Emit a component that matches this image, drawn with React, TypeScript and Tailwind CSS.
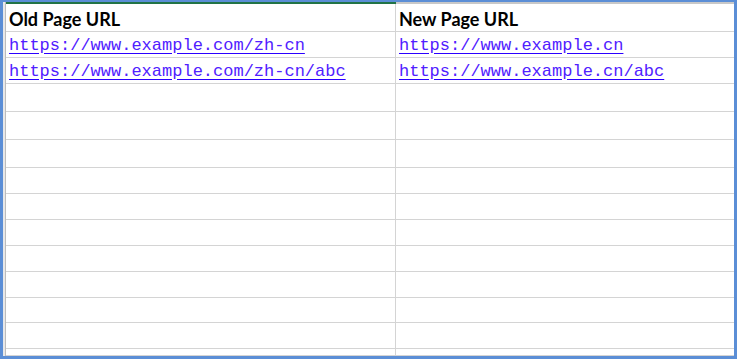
const rows: { h: number; old?: string; next?: string }[] = [
  { h: 26, old: "https://www.example.com/zh-cn", next: "https://www.example.cn" },
  { h: 26, old: "https://www.example.com/zh-cn/abc", next: "https://www.example.cn/abc" },
  { h: 28 },
  { h: 28 },
  { h: 28 },
  { h: 26 },
  { h: 26 },
  { h: 26 },
  { h: 26 },
  { h: 26 },
  { h: 25 },
  { h: 26 },
  { h: 7 },
];

function Link({ text }: { text: string }) {
  return (
    <span className="text-[#5020ff] underline decoration-[#2b00ff] underline-offset-[3px] font-['Liberation_Mono',monospace] text-[17px] leading-none whitespace-nowrap">
      {text}
    </span>
  );
}

export default function App() {
  return (
    <div className="w-[740px] h-[361px] bg-white">
      <div className="w-[737px] h-[359px] border-l-[3px] border-r-[3px] border-t-[2px] border-b-[3px] border-[#5b8ed6] flex overflow-hidden">
        {/* row header edge */}
        <div className="w-[3px] bg-[#e8e8e8] border-r border-[#bcbcbc] shrink-0" />
        <div className="flex-1 flex flex-col">
          {/* top edge: selected column A */}
          <div className="flex h-[2px] shrink-0">
            <div className="w-[390px] bg-[#217346]" />
            <div className="flex-1 bg-[#c8c8c8]" />
          </div>
          {/* header row */}
          <div className="flex h-[28px] shrink-0 border-b border-[#d4d4d4] font-['Lato',sans-serif] font-bold text-[18px] text-black">
            <div className="w-[390px] border-r border-[#d4d4d4] pl-[3px] flex items-end pb-[3px] leading-none">Old Page URL</div>
            <div className="flex-1 pl-[3px] flex items-end pb-[3px] leading-none">New Page URL</div>
          </div>
          {rows.map((r, i) => (
            <div key={i} className="flex shrink-0 border-b border-[#d4d4d4]" style={{ height: r.h }}>
              <div className="w-[390px] border-r border-[#d4d4d4] pl-[3px] flex items-end pb-[3px]">
                {r.old && <Link text={r.old} />}
              </div>
              <div className="flex-1 pl-[3px] flex items-end pb-[3px]">
                {r.next && <Link text={r.next} />}
              </div>
            </div>
          ))}
        </div>
      </div>
    </div>
  );
}
